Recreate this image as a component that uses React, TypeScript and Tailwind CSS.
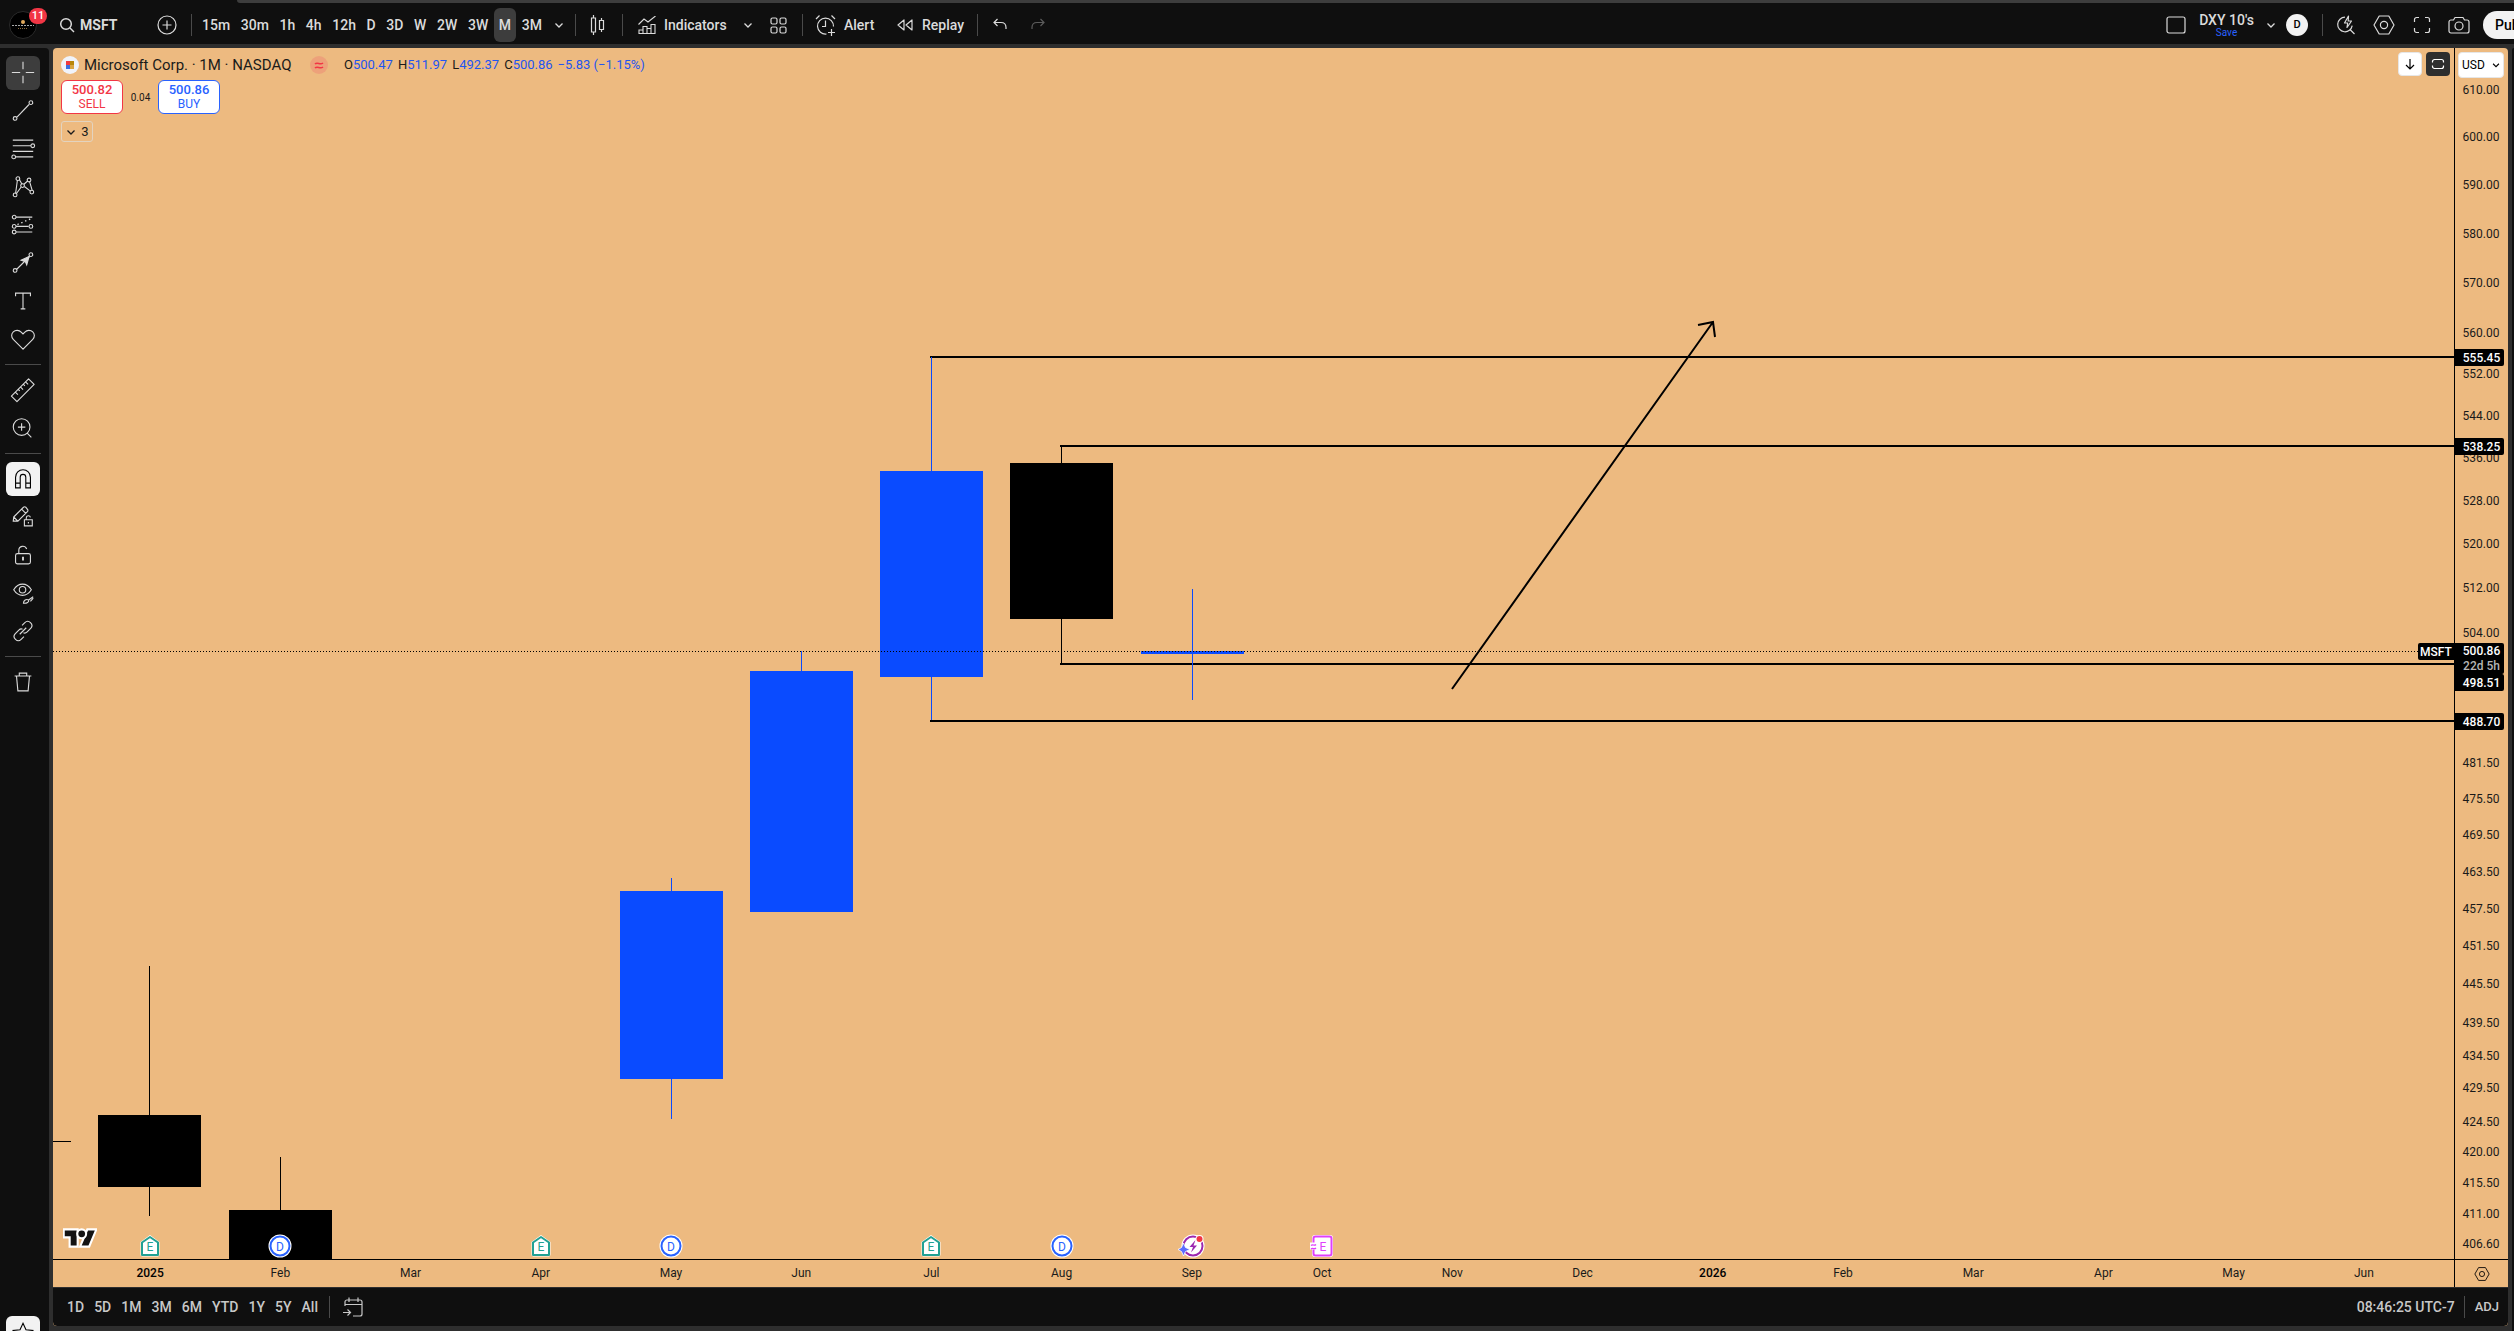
import React from "react";

const PLOT_W = 2401;
const PLOT_H = 1211;

/* Logarithmic price scale: 610.00 sits at 42px, 406.60 close to the bottom. */
const priceY = (price: number) => 42 + 2846 * Math.log(610 / price);

const INTERVALS = ["15m", "30m", "1h", "4h", "12h", "D", "3D", "W", "2W", "3W", "M", "3M"];
const RANGES = ["1D", "5D", "1M", "3M", "6M", "YTD", "1Y", "5Y", "All"];
const MONTHS = [
  "2025", "Feb", "Mar", "Apr", "May", "Jun", "Jul", "Aug", "Sep",
  "Oct", "Nov", "Dec", "2026", "Feb", "Mar", "Apr", "May", "Jun",
];
const PRICES = [
  610, 600, 590, 580, 570, 560, 552, 544, 536, 528, 520, 512, 504, 481.5, 475.5, 469.5,
  463.5, 457.5, 451.5, 445.5, 439.5, 434.5, 429.5, 424.5, 420, 415.5, 411, 406.6,
];

type Candle = { x: number; high: number; top: number; bottom: number; low: number; up: boolean };
const CANDLES: Candle[] = [
  { x: 96, high: 918, top: 1067, bottom: 1139, low: 1168, up: false },
  { x: 227, high: 1109, top: 1162, bottom: 1211, low: 1211, up: false },
  { x: 618, high: 830, top: 843, bottom: 1031, low: 1071, up: true },
  { x: 748, high: 603, top: 623, bottom: 864, low: 864, up: true },
  { x: 878, high: 309, top: 423, bottom: 629, low: 672, up: true },
  { x: 1008, high: 397, top: 415, bottom: 571, low: 617, up: false },
  { x: 1139, high: 541, top: 603, bottom: 606, low: 652, up: true },
];
const LEVELS = [
  { x: 877, y: 308 },
  { x: 1007, y: 397 },
  { x: 1007, y: 615 },
  { x: 877, y: 672 },
];

function Icon({ children, className = "size-7", box = 28 }: { children: React.ReactNode; className?: string; box?: number }) {
  return (
    <svg
      viewBox={`0 0 ${box} ${box}`}
      className={`shrink-0 ${className}`}
      fill="none"
      stroke="currentColor"
      strokeWidth="1"
      aria-hidden="true"
    >
      {children}
    </svg>
  );
}

function Chevron({ className = "size-3" }: { className?: string }) {
  return (
    <Icon box={12} className={className}>
      <path d="M2.500 4.500 6 8l3.500-3.500" strokeWidth="1.300" />
    </Icon>
  );
}

function Divider() {
  return <span className="h-[22px] w-px shrink-0 bg-[#4a4a4a]" />;
}

function HexGear({ className = "size-7" }: { className?: string }) {
  return (
    <Icon className={className}>
      <path d="M9.200 5h9.600L24 14l-5.200 9H9.200L4 14z" strokeWidth="1.200" strokeLinejoin="round" />
      <circle cx="14" cy="14" r="3.600" strokeWidth="1.200" />
    </Icon>
  );
}

function TopBar() {
  return (
    <header className="flex h-[41px] shrink-0 items-center overflow-hidden bg-[#0f0f0f] pt-[3px] text-[14px] font-medium text-[#dbdbdb]">
      <div className="flex w-[191px] shrink-0 items-center">
        <button aria-label="Account, 11 notifications" className="relative ml-[9px] flex size-7 items-center justify-center rounded-full border border-[#2a2a2a] bg-black">
          <svg viewBox="0 0 26 26" className="size-[26px]" aria-hidden="true">
            <circle cx="13" cy="10" r="2" fill="#e0a95c" />
            <path d="M2 13.500h22" stroke="#a8a8a8" strokeWidth="1" strokeDasharray="2 1" />
            <path d="M8 16.500h10" stroke="#8a6a3c" strokeWidth="1" strokeDasharray="1 1" />
          </svg>
          <span className="absolute -top-[4px] left-[19px] flex h-4 w-[18px] items-center justify-center rounded-full bg-[#f23645] text-[11px] text-white">
            11
          </span>
        </button>
        <button className="ml-[22px] flex items-center gap-[5px] font-bold">
          <Icon box={16} className="size-4">
            <circle cx="7" cy="7" r="5.300" strokeWidth="1.500" />
            <path d="m11 11 4 4" strokeWidth="1.500" />
          </Icon>
          MSFT
        </button>
        <button aria-label="Compare or add symbol" className="mr-[14px] ml-auto">
          <Icon box={20} className="size-5">
            <circle cx="10" cy="10" r="9" strokeWidth="1.200" />
            <path d="M10 5.500v9M5.500 10h9" strokeWidth="1.200" />
          </Icon>
        </button>
      </div>
      <Divider />
      <nav className="ml-[5px] flex w-[350px] shrink-0 items-center justify-between">
        {INTERVALS.map((t) => (
          <button key={t} className={`flex h-[34px] items-center rounded-[6px] px-[5px] ${t === "M" ? "bg-[#3d3d3d]" : ""}`}>
            {t}
          </button>
        ))}
      </nav>
      <button aria-label="Chart interval" className="flex w-[28px] shrink-0 justify-start pl-[6px]">
        <Chevron />
      </button>
      <div className="flex shrink-0 items-center">
        <Divider />
        <button aria-label="Candles" className="flex w-[46px] justify-center">
          <Icon box={20} className="size-5">
            <path d="M4.500 0v3M4.500 17v3M2.500 3h4v14h-4zM12.500 3v2.500M12.500 14.500V17M10.500 5.500h4v9h-4z" strokeWidth="1.200" />
          </Icon>
        </button>
        <Divider />
        <button className="ml-[15px] flex w-[91px] items-center gap-[8px]">
          <Icon box={18} className="size-[18px]">
            <path d="M.5 8.500 6 3l4 3 7.500-6M1 17.500V14h4v3.500zM5 17.500v-7h4v7M9 17.500v-5h4v5M13 17.500v-9h4v9zM1 17.500h16" strokeWidth="1.100" />
          </Icon>
          Indicators
        </button>
        <button aria-label="Favorite indicators" className="ml-[13px]">
          <Chevron />
        </button>
        <button aria-label="Indicator templates" className="mr-[15px] ml-[16px]">
          <Icon box={17} className="size-[17px]">
            <rect x="1" y="1" width="6" height="6" rx="1.500" strokeWidth="1.200" />
            <rect x="10" y="1" width="6" height="6" rx="1.500" strokeWidth="1.200" />
            <rect x="1" y="10" width="6" height="6" rx="1.500" strokeWidth="1.200" />
            <rect x="10" y="10" width="6" height="6" rx="1.500" strokeWidth="1.200" />
          </Icon>
        </button>
        <Divider />
        <button className="ml-[12px] flex w-[81px] items-center gap-[7px]">
          <Icon box={22} className="size-[22px]">
            <path d="M18.500 12.500a8 8 0 1 0-7 7.500M10.500 6.500v6H7M1 5l3.500-3.500M16.500 1.500 20 5M16.500 15v7M13 18.500h7" strokeWidth="1.200" />
          </Icon>
          Alert
        </button>
        <button className="flex w-[81px] items-center gap-[8px]">
          <Icon box={18} className="size-[18px]">
            <path d="M8 4v10L2 9zM16 4v10l-6-5z" strokeWidth="1.200" strokeLinejoin="round" />
          </Icon>
          Replay
        </button>
        <Divider />
        <button aria-label="Undo" className="ml-[14px]">
          <Icon box={16} className="size-4">
            <path d="M5.500 2 2 5.500 5.500 9M2 5.500h7c3 0 5 1.800 5 5V12" strokeWidth="1.200" />
          </Icon>
        </button>
        <button aria-label="Redo" className="ml-[22px] text-[#5c5c5c]">
          <Icon box={16} className="size-4">
            <path d="M10.500 2 14 5.500 10.500 9M14 5.500H7c-3 0-5 1.800-5 5V12" strokeWidth="1.200" />
          </Icon>
        </button>
      </div>
      <div className="ml-auto flex shrink-0 items-center">
        <button aria-label="Select layout">
          <Icon box={20} className="size-5">
            <rect x="1" y="2" width="18" height="16" rx="2" strokeWidth="1.200" />
          </Icon>
        </button>
        <button className="ml-[10px] flex w-[61px] flex-col items-center">
          <span className="leading-[14px]">DXY 10's</span>
          <span className="text-[10px] leading-[11px] font-normal text-[#2962ff]">Save</span>
        </button>
        <button aria-label="Manage layouts" className="ml-[8px]">
          <Chevron />
        </button>
        <button aria-label="Layout owner" className="mr-[14px] ml-[9px] flex size-[22px] items-center justify-center rounded-full bg-[#f2f2f2] text-[11px] text-black">
          D
        </button>
        <Divider />
        <button aria-label="Quick search" className="ml-[13px]">
          <Icon box={20} className="size-5">
            <path d="M9 2.200a7.300 7.300 0 1 0 7.200 8.500M14 14.500l4.500 4.500M12.500 1 8.500 8h3.200l-.7 4.500L15.500 6h-3.300z" strokeWidth="1.200" strokeLinejoin="round" />
          </Icon>
        </button>
        <button aria-label="Settings" className="ml-[14px]">
          <HexGear />
        </button>
        <button aria-label="Fullscreen" className="ml-[15px]">
          <Icon box={18} className="size-[18px]">
            <path d="M1.500 6V3.500a2 2 0 0 1 2-2H6M12 1.500h2.500a2 2 0 0 1 2 2V6M16.500 12v2.500a2 2 0 0 1-2 2H12M6 16.500H3.500a2 2 0 0 1-2-2V12" strokeWidth="1.200" />
          </Icon>
        </button>
        <button aria-label="Take a snapshot" className="ml-[17px]">
          <Icon box={22} className="size-[22px]">
            <path d="M7 3.500h8l1.500 2.500H19a2 2 0 0 1 2 2v9a2 2 0 0 1-2 2H3a2 2 0 0 1-2-2V8a2 2 0 0 1 2-2h2.500z" strokeWidth="1.200" strokeLinejoin="round" />
            <circle cx="11" cy="12" r="4" strokeWidth="1.200" />
          </Icon>
        </button>
        <div className="ml-[13px] w-[31px] overflow-hidden">
          <button className="flex h-7 items-center rounded-full bg-[#f2f2f2] px-3 text-black">Publish</button>
        </div>
      </div>
    </header>
  );
}

const TOOL_GROUPS: { name: string; art: React.ReactNode }[][] = [
  [
    { name: "Cross", art: <path d="M14 2v8M14 17v8M2 13.500h9M17 13.500h9" /> },
    {
      name: "Trend line",
      art: (
        <>
          <path d="M7.500 20.500 20.500 7" />
          <circle cx="5.500" cy="22" r="2" />
          <circle cx="22.500" cy="5" r="2" />
        </>
      ),
    },
    {
      name: "Fib retracement",
      art: (
        <>
          <path d="M3 4.500h22M3 10.500h19.500M3 16.500h22M6 22.500h19" />
          <circle cx="24.500" cy="10.500" r="2" />
          <circle cx="4" cy="22.500" r="2" />
        </>
      ),
    },
    {
      name: "XABCD pattern",
      art: (
        <>
          <path d="M6 21 8 6.500M10 6l3 5M15 11l4-3.500M21 8l3 10M15.500 13.500 22 18.500M12 14l-5 7" />
          <circle cx="5.500" cy="22.500" r="2" />
          <circle cx="8.500" cy="5" r="2" />
          <circle cx="13.500" cy="12.500" r="2" />
          <circle cx="20.500" cy="6.500" r="2" />
          <circle cx="23.500" cy="19.500" r="2" />
        </>
      ),
    },
    {
      name: "Long position",
      art: (
        <>
          <path d="M6.500 5.500H24M6.500 15.500H20M6.500 21.500H24" />
          <path d="M8 13.500 23 7" strokeDasharray="1.500 3" strokeWidth="1.500" />
          <circle cx="4.500" cy="5.500" r="2" />
          <circle cx="4.500" cy="15.500" r="2" />
          <circle cx="4.500" cy="21.500" r="2" />
          <circle cx="22.500" cy="15.500" r="2" />
        </>
      ),
    },
    {
      name: "Arrow",
      art: (
        <>
          <path d="M7 21 21 7" />
          <path d="m20.500 7-2.500 9-1.500-3.500L12 11z" fill="currentColor" />
          <circle cx="5.500" cy="22" r="2" />
          <circle cx="22.500" cy="5" r="2" />
        </>
      ),
    },
    { name: "Text", art: <path d="M6 9V5.500h16V9M14 5.500v17M11.500 22.500h5" /> },
    {
      name: "Icons",
      art: <path d="M14 25 3.500 14.500c-2.300-2.300-2.300-6 0-8.200 2.400-2.200 6.300-2 8.500.2L14 8.500l2-2c2.200-2.200 6.100-2.400 8.500-.2 2.300 2.200 2.300 5.900 0 8.200z" />,
    },
  ],
  [
    {
      name: "Measure",
      art: (
        <path d="M1.500 20.500 20 2l6 6L7.500 26.500zM6 16.500l2.500 2.500M9 13.500l1.500 1.500M11.500 11l2.500 2.500M14.500 8 16 9.500M17 5.500 19.500 8" strokeLinejoin="round" />
      ),
    },
    {
      name: "Zoom in",
      art: (
        <>
          <circle cx="12.500" cy="13" r="9" />
          <path d="M12.500 9v8M8.500 13h8M18.500 19.500 23 24" />
        </>
      ),
    },
  ],
  [
    {
      name: "Magnet mode",
      art: <path d="M6 23.500V12a8 8 0 0 1 16 0v11.500h-5V12a3 3 0 0 0-6 0v11.500zM6 18.500h5M17 18.500h5" />,
    },
    {
      name: "Stay in drawing mode",
      art: (
        <>
          <path d="M4 14 14.500 3.500a2 2 0 0 1 2.500 0L19 6a2 2 0 0 1 0 2L8.500 18.500H3.500zM4 14l4.500 4.500M12.500 5.500 17 10" />
          <path d="M15.500 17h8.500v6.500h-8.500zM17.500 17v-2c0-3 4-3 4.500-.5M19.800 19.500V21" />
        </>
      ),
    },
    {
      name: "Lock all drawings",
      art: (
        <>
          <rect x="6" y="12.500" width="16" height="11" rx="2" />
          <path d="M9.500 12.500V9c0-5 6.500-6 8.500-1.500" />
          <path d="M14 16v4" strokeWidth="2" />
        </>
      ),
    },
    {
      name: "Hide drawings",
      art: (
        <>
          <path d="M4 10.500C9 2.500 18 2.500 23 10.500 18 18.500 9 18.500 4 10.500z" />
          <circle cx="13.500" cy="10.500" r="3.500" />
          <path d="M14.500 25c0-3 3-5 5.500-3.500 1 2-2 4-5.500 3.500zM20 21.500l5-3.500M22 23l3-3.500" />
        </>
      ),
    },
    {
      name: "Link drawings",
      art: <path d="m13 8 3-3c4-4 10 2 6.500 6l-4 4c-1 1-3 1.500-4 1M15 20l-3 3c-4 4-10-2-6.500-6l4-4c1-1 3-1.500 4-1M10.500 17.500l7-7" />,
    },
  ],
  [{ name: "Remove objects", art: <path d="M5 7.500h18M7 7.500 8.500 23.500h11L21 7.500M10 7V4.500h8V7" /> }],
];

function Sidebar() {
  return (
    <aside className="flex w-[49px] shrink-0 flex-col overflow-hidden rounded-tr-[4px] bg-[#0f0f0f] pt-[6px] text-[#dbdbdb]">
      {TOOL_GROUPS.map((group, g) => (
        <div key={g} className="flex flex-col">
          {g > 0 && <span className="my-[6px] ml-[5px] h-px w-9 bg-[#4a4a4a]" />}
          {group.map(({ name, art }) => (
            <button
              key={name}
              aria-label={name}
              className={`my-[2px] ml-[6px] flex size-[34px] items-center justify-center rounded-[6px] ${
                name === "Cross" ? "bg-[#3d3d3d]" : name === "Magnet mode" ? "bg-[#f2f2f2] text-black" : ""
              }`}
            >
              <Icon className="size-[26px]">
                <g strokeWidth="1.200">{art}</g>
              </Icon>
            </button>
          ))}
        </div>
      ))}
      <button aria-label="Favorite drawing tools" className="mt-auto -mb-[19px] ml-[6px] flex size-[34px] shrink-0 items-center justify-center rounded-[6px] bg-[#f2f2f2] text-black">
        <Icon className="size-[26px]">
          <path d="m14 3.500 3.200 7 7.300.8-5.500 5 1.600 7.200L14 20l-6.600 3.500L9 16.300l-5.500-5 7.300-.8z" strokeWidth="1.200" />
        </Icon>
      </button>
    </aside>
  );
}

function Marker({ kind }: { kind: "E" | "D" | "S" | "F" }) {
  if (kind === "E")
    return (
      <svg viewBox="0 0 24 24" className="size-6">
        <path d="M4 22.500a2 2 0 0 1-1.500-2V8L12 1l9.500 7v12.500a2 2 0 0 1-1.500 2z" fill="#fff" />
        <path d="M4 21V8.500L12 3l8 5.500V21z" fill="#fff" stroke="#22a194" strokeWidth="2" strokeLinejoin="round" />
        <text x="12" y="17" textAnchor="middle" fontSize="12" fill="#22a194">E</text>
      </svg>
    );
  if (kind === "D")
    return (
      <svg viewBox="0 0 24 24" className="size-6">
        <circle cx="12" cy="12" r="11.500" fill="#fff" />
        <circle cx="12" cy="12" r="9.500" fill="#fff" stroke="#2962ff" strokeWidth="2" />
        <text x="12" y="16.500" textAnchor="middle" fontSize="12" fill="#2962ff">D</text>
      </svg>
    );
  if (kind === "F")
    return (
      <svg viewBox="0 0 24 24" className="size-6">
        <rect x="2" y="1" width="21" height="22" rx="3" fill="#fff" />
        <rect x="3.500" y="2.500" width="18" height="19" rx="2" fill="#fff" stroke="#e040fb" strokeWidth="2" />
        <path d="M0 8.500h7v7H0z" fill="#fff" />
        <path d="M1 11.500c2-2 3 1 5-1M1 15c2-2 3 1 5-1" fill="none" stroke="#e040fb" strokeWidth="1.300" />
        <text x="13" y="16.500" textAnchor="middle" fontSize="12" fill="#e040fb">E</text>
      </svg>
    );
  return (
    <svg viewBox="0 0 28 24" className="h-6 w-7">
      <circle cx="15" cy="12" r="11.500" fill="#fff" />
      <circle cx="15" cy="12" r="9.500" fill="#fff" stroke="#9c27b0" strokeWidth="2" />
      <path d="m17.500 6-6 7H15l-2 5.500 6-7h-3.500z" fill="#9c27b0" />
      <circle cx="21.500" cy="5" r="4" fill="#fff" />
      <circle cx="21.500" cy="5" r="3" fill="#f23645" />
      <path d="m5.500 9 2 4.500L12 15.500l-4.500 2-2 4.500-2-4.500L0 15.500l3.500-2z" fill="#5b6cff" stroke="#fff" strokeWidth=".8" />
    </svg>
  );
}

const MARKERS: Record<number, "E" | "D" | "S" | "F"> = { 0: "E", 1: "D", 3: "E", 4: "D", 6: "E", 7: "D", 8: "S", 9: "F" };

function Quote({ label, value }: { label: string; value: string }) {
  return (
    <span>
      {label}
      <span className="text-[#1f55f0]">{value}</span>
    </span>
  );
}

function Legend() {
  return (
    <div className="absolute top-[6px] left-2 flex flex-col items-start">
      <div className="flex h-[22px] items-center text-[13px] text-[#1a1a1a]">
        <svg viewBox="0 0 18 18" className="size-[18px]" aria-hidden="true">
          <circle cx="9" cy="9" r="9" fill="#f0f3fa" />
          <path d="M5 5h4v4H5z" fill="#f03a3e" />
          <path d="M9 5h4v4H9z" fill="#b8860b" />
          <path d="M5 9h4v4H5z" fill="#3b6fe0" />
          <path d="M9 9h4v4H9z" fill="#d9a441" />
        </svg>
        <h1 className="ml-[5px] w-[226px] text-[15px] whitespace-nowrap">Microsoft Corp. · 1M · NASDAQ</h1>
        <svg viewBox="0 0 18 18" className="size-[18px]" aria-hidden="true">
          <circle cx="9" cy="9" r="9" fill="#eda17a" />
          <path d="M5 8c2.500-2.500 5 1.500 8-1M5 12c2.500-2.500 5 1.500 8-1" fill="none" stroke="#f23645" strokeWidth="1.600" />
        </svg>
        <div className="ml-4 flex gap-[5px] whitespace-nowrap">
          <Quote label="O" value="500.47" />
          <Quote label="H" value="511.97" />
          <Quote label="L" value="492.37" />
          <Quote label="C" value="500.86" />
          <span className="text-[#1f55f0]">−5.83 (−1.15%)</span>
        </div>
      </div>
      <div className="mt-[4px] flex items-center">
        <button className="flex h-[34px] w-[62px] flex-col items-center justify-center rounded-[6px] border border-[#f23645] bg-white text-[12px] leading-[14px] text-[#f23645]">
          <span className="text-[13px] font-medium">500.82</span>
          <span>SELL</span>
        </button>
        <span className="w-[35px] text-center text-[10px] text-[#1a1a1a]">0.04</span>
        <button className="flex h-[34px] w-[62px] flex-col items-center justify-center rounded-[6px] border border-[#2962ff] bg-white text-[12px] leading-[14px] text-[#2962ff]">
          <span className="text-[13px] font-medium">500.86</span>
          <span>BUY</span>
        </button>
      </div>
      <button aria-label="Show 3 indicators" className="mt-[7px] flex h-[21px] w-8 items-center justify-center gap-1 rounded-[3px] border border-[#e3d3bf] text-[13px] text-[#1a1a1a]">
        <Chevron />
        3
      </button>
    </div>
  );
}

function Plot() {
  return (
    <div className="relative min-w-0 flex-1 overflow-hidden">
      <svg viewBox={`0 0 ${PLOT_W} ${PLOT_H}`} preserveAspectRatio="none" className="absolute inset-0 size-full" aria-label="Microsoft monthly candles">
        <g shapeRendering="crispEdges">
          <rect x="0" y="1093" width="18" height="1" />
          {LEVELS.map((l) => (
            <rect key={l.y} x={l.x} y={l.y} width={PLOT_W - l.x} height="2" />
          ))}
          {CANDLES.map((c) => (
            <g key={c.x} fill={c.up ? "#0a4bff" : "#000"}>
              <rect x={c.x} y={c.high} width="1" height={c.low - c.high} />
              <rect x={c.x - 51} y={c.top} width="103" height={c.bottom - c.top} />
            </g>
          ))}
          <path d={`M0 603.500H${PLOT_W}`} stroke="#000" strokeDasharray="1 2" />
        </g>
        <path d="M1399 641 1660 274M1645 277l15-3 2 15" fill="none" stroke="#000" strokeWidth="2" />
      </svg>
      <Legend />
      <div className="absolute top-1 right-1 flex gap-1">
        <button aria-label="Move pane down" className="flex size-6 items-center justify-center rounded-[4px] border border-[#e6e6e6] bg-white text-black">
          <Icon box={16} className="size-4">
            <path d="M8 3v10M4 9l4 4 4-4" strokeWidth="1.200" />
          </Icon>
        </button>
        <button aria-label="Maximize pane" className="flex size-6 items-center justify-center rounded-[4px] bg-[#2e2e2e] text-white">
          <Icon box={16} className="size-4">
            <path d="M2.500 6.500V5.500a2 2 0 0 1 2-2h7a2 2 0 0 1 2 2v1M13.500 9.500v1a2 2 0 0 1-2 2h-7a2 2 0 0 1-2-2v-1" strokeWidth="1.200" />
          </Icon>
        </button>
      </div>
      <svg viewBox="-2 0 40 26" className="absolute bottom-[10px] left-[10px] h-[22px] w-[34px]" aria-label="TradingView">
        <g fill="#131313" stroke="#fff" strokeWidth="5" paintOrder="stroke">
          <path d="M14 22H7V11H0V4h14zM28 22h-8l7.500-18h8z" />
          <circle cx="20" cy="8" r="4" />
        </g>
      </svg>
      <div className="absolute inset-x-0 bottom-0 flex pr-[25px] pl-[32px]">
        {MONTHS.map((m, i) => (
          <div key={`${m}${i}`} className="flex h-[25px] flex-1 justify-center">
            {MARKERS[i] && <Marker kind={MARKERS[i]} />}
          </div>
        ))}
      </div>
      <span className="absolute top-[595px] right-0 flex h-[17px] w-9 items-center justify-center rounded-l-[2px] bg-black text-[12px] font-medium text-white">
        MSFT
      </span>
    </div>
  );
}

const TAGS = [
  { top: 301, text: "555.45" },
  { top: 390, text: "538.25" },
  { top: 626, text: "498.51" },
  { top: 665, text: "488.70" },
];

function PriceAxis() {
  return (
    <div className="relative w-[54px] shrink-0 border-l border-black text-[12px] text-[#1a1a1a]">
      {PRICES.map((p) => (
        <span key={p} className="absolute right-px left-0 -translate-y-1/2 text-center leading-[14px]" style={{ top: `${(priceY(p) / PLOT_H) * 100}%` }}>
          {p.toFixed(2)}
        </span>
      ))}
      {TAGS.map((t) => (
        <span
          key={t.text}
          className="absolute right-1 left-0 flex h-[17px] items-center justify-center rounded-r-[2px] bg-black pl-1 font-medium text-white"
          style={{ top: `${(t.top / PLOT_H) * 100}%` }}
        >
          {t.text}
        </span>
      ))}
      <span className="absolute top-[595px] right-1 left-0 flex h-[31px] flex-col items-center rounded-r-[2px] bg-black pl-1 leading-[15px] font-medium text-white">
        <span className="pt-px">500.86</span>
        <span className="text-[#b5b5b5]">22d 5h</span>
      </span>
      <label className="absolute top-1 right-1 left-[3px] flex h-[26px] items-center rounded-[4px] border border-[#e6e6e6] bg-white text-black">
        <select aria-label="Currency" className="w-full appearance-none bg-transparent pl-[3px] text-[12px] outline-none">
          <option>USD</option>
        </select>
        <Chevron className="pointer-events-none absolute right-[2px] size-[10px]" />
      </label>
    </div>
  );
}

function TimeAxis() {
  return (
    <div className="flex h-7 shrink-0 border-t border-black text-[12px] text-[#1a1a1a]">
      <div className="flex min-w-0 flex-1 items-center pr-[25px] pb-px pl-[32px]">
        {MONTHS.map((m, i) => (
          <span key={`${m}${i}`} className={`flex-1 text-center ${m.startsWith("20") ? "font-medium text-black" : ""}`}>
            {m}
          </span>
        ))}
      </div>
      <div className="flex w-[54px] shrink-0 items-center justify-center border-l border-black text-black">
        <button aria-label="Axis settings">
          <HexGear className="size-5" />
        </button>
      </div>
    </div>
  );
}

function BottomBar() {
  return (
    <footer className="flex h-[39px] shrink-0 items-center rounded-b-[4px] border-t border-[#2e2e2e] bg-[#0f0f0f] text-[14px] font-medium text-[#c8c8c8]">
      <nav className="ml-[9px] flex w-[261px] items-center justify-between">
        {RANGES.map((r) => (
          <button key={r} className="px-[5px]">
            {r}
          </button>
        ))}
      </nav>
      <span className="w-[6px]" />
      <Divider />
      <button aria-label="Go to date" className="ml-[13px]">
        <Icon box={20} className="size-5">
          <path d="M2 9V5a2 2 0 0 1 2-2h13a2 2 0 0 1 2 2v12a2 2 0 0 1-2 2h-7M2 7.500h17M6 .500V5M15 .500V5M0 15.500h7M4.500 12.500l3 3-3 3" strokeWidth="1.200" />
        </Icon>
      </button>
      <button className="mr-[9px] ml-auto">08:46:25 UTC-7</button>
      <Divider />
      <button className="mr-[9px] ml-[10px] text-[13px]">ADJ</button>
    </footer>
  );
}

export default function App() {
  return (
    <div className="flex h-screen flex-col overflow-hidden bg-[#2e2e2e] font-['Roboto',sans-serif]">
      <div className="flex h-[3px] shrink-0 bg-[#0f0f0f]">
        <span className="ml-[237px] flex-1 rounded-bl-[4px] bg-[#3d3d3d]" />
      </div>
      <TopBar />
      <div className="flex min-h-0 flex-1 gap-1 pt-1">
        <Sidebar />
        <main className="mb-[5px] flex min-w-0 flex-1 flex-col overflow-hidden rounded-[4px] bg-[#edba80]">
          <div className="flex min-h-0 flex-1">
            <Plot />
            <PriceAxis />
          </div>
          <TimeAxis />
          <BottomBar />
        </main>
        <div className="w-[2px] shrink-0 rounded-tl-[4px] bg-[#0f0f0f]" />
      </div>
    </div>
  );
}
